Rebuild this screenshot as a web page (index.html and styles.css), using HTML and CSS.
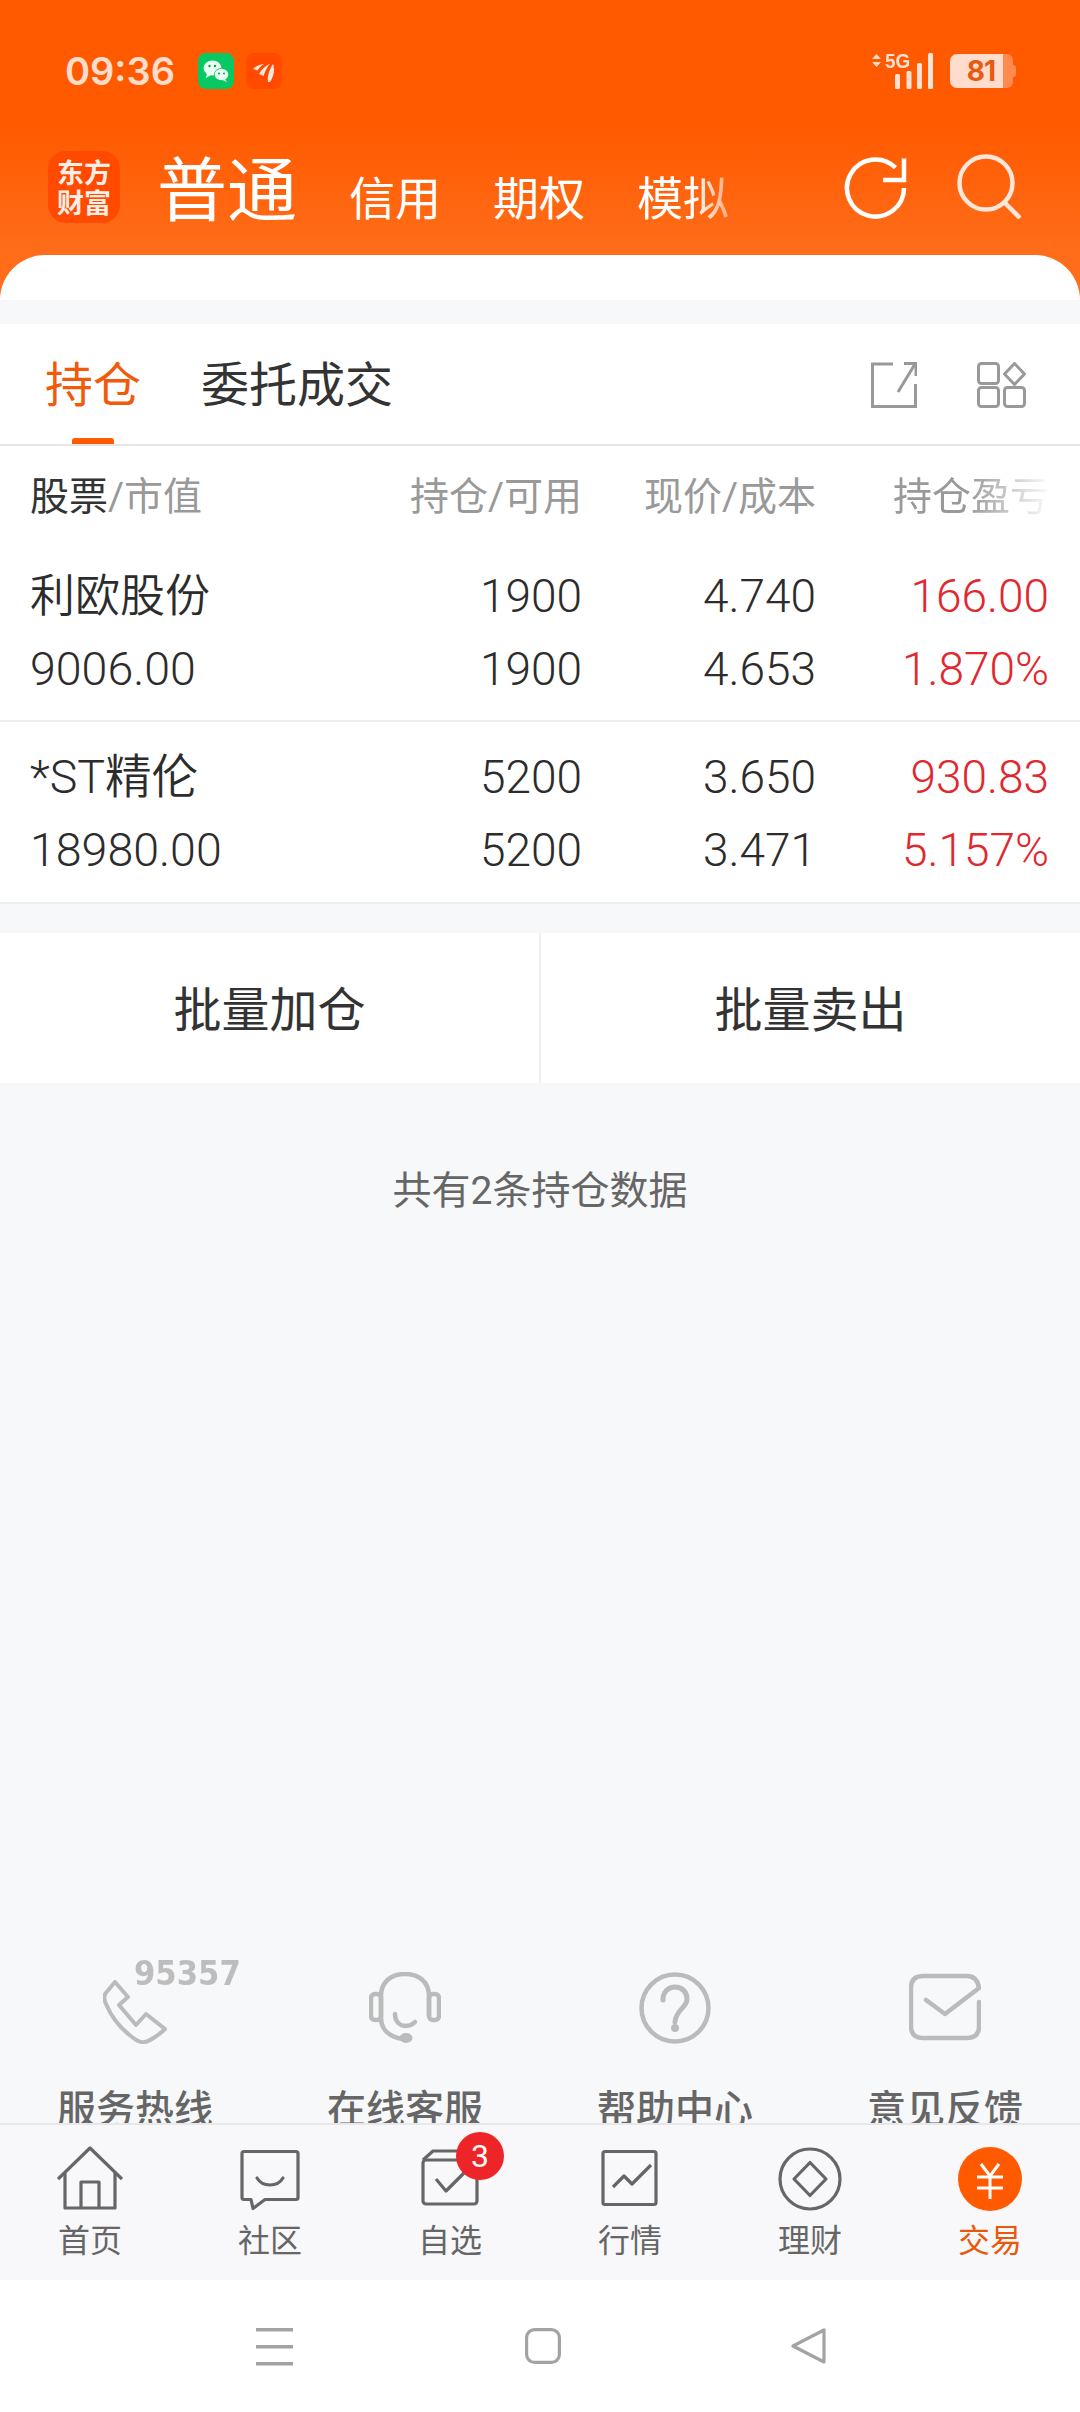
FILE: index.html
```html
<!DOCTYPE html>
<html lang="zh-CN">
<head>
<meta charset="utf-8">
<title>交易</title>
<link rel="stylesheet" href="styles.css">
</head>
<body>
<div class="app">
  <header class="header">
    <div class="status">
      <div class="status-left">
        <span class="time">09:36</span>
        <svg class="notif notif-first" viewBox="0 0 36 36"><rect width="36" height="36" rx="8" fill="#07c862"/><ellipse cx="14.500" cy="15" rx="9" ry="7.600" fill="#eafff2"/><path d="M9 20l-1 5 5-3z" fill="#eafff2"/><ellipse cx="23.500" cy="21.500" rx="7.600" ry="6.400" fill="#07c862"/><ellipse cx="23.500" cy="21.500" rx="6.800" ry="5.800" fill="#eafff2"/><path d="M27 26l2 3-4-1.500z" fill="#eafff2"/><circle cx="11.500" cy="13" r="1.200" fill="#07a050"/><circle cx="17" cy="13" r="1.200" fill="#07a050"/><circle cx="21" cy="20.500" r="1" fill="#07a050"/><circle cx="26" cy="20.500" r="1" fill="#07a050"/></svg>
        <svg class="notif" viewBox="0 0 36 36"><rect width="36" height="36" rx="8" fill="#ff4a00"/><path d="M7 16c3-3 7-4.500 11-5-3 2-5 4-6.500 6.500z" fill="#ffe7dc"/><path d="M13 21c2-4 6-8 11-10.500-3 4-5 8-6.500 12.500z" fill="#ffe7dc"/><path d="M22 29c-1-5 1-12 5-18 2 5 1 12-3 18z" fill="#ffe7dc"/></svg>
      </div>
      <div class="status-right">
        <svg class="net" viewBox="0 0 61 36"><path d="M0 6l4.500-5 4.500 5zM0 9l4.500 5 4.500-5z" fill="#ffd8c6"/><rect x="23" y="21" width="5" height="15" rx="1.500" fill="#ffe2d4"/><rect x="34.500" y="18" width="5" height="18" rx="1.500" fill="#ffe2d4"/><rect x="45" y="10" width="5" height="26" rx="1.500" fill="#ffe2d4"/><rect x="56" y="0" width="5" height="36" rx="1.500" fill="#ffe2d4"/></svg>
        <span class="five-g">5G</span>
        <div class="battery"><span class="battery-level">81</span><span class="battery-rest"></span><span class="battery-nub"></span></div>
      </div>
    </div>
    <nav class="nav">
      <div class="logo">东方<br>财富</div>
      <span class="nav-main">普通</span>
      <span class="nav-item">信用</span>
      <span class="nav-item">期权</span>
      <span class="nav-item nav-fade">模拟</span>
      <svg class="nav-refresh" viewBox="0 0 66 66" fill="none" stroke="#fff" stroke-width="4.500"><path d="M61 33a28.500 28.500 0 1 1-8.500-20.300"/><path d="M61 3.500v21.500H40"/></svg>
      <svg class="nav-search" viewBox="0 0 66 66" fill="none" stroke="#ffe6da" stroke-width="4.500"><circle cx="30" cy="30" r="26.500"/><path d="M49 50l15 15"/></svg>
    </nav>
    <div class="sheet"></div>
  </header>

  <main class="content">
    <section class="panel">
      <div class="tabs">
        <span class="tab tab-active">持仓</span>
        <span class="tab">委托成交</span>
        <svg class="tab-share" viewBox="0 0 46 46" fill="none" stroke="#999" stroke-width="3"><path d="M22 2H1.500v42.500h43V22"/><path d="M44 2 27 30"/><path d="M33 1.500h12V14"/></svg>
        <svg class="tab-grid" viewBox="0 0 50 46" fill="none" stroke="#999" stroke-width="3"><rect x="1.500" y="1.500" width="20" height="20" rx="3"/><rect x="1.500" y="25.500" width="20" height="19" rx="3"/><rect x="27.500" y="25.500" width="20" height="19" rx="3"/><path d="M37.500 1.500l10 10.500-10 10.500-10-10.500z" stroke-linejoin="round"/></svg>
      </div>
      <div class="grid grid-head">
        <span class="head-left"><b>股票</b>/市值</span>
        <span class="cell-right">持仓/可用</span>
        <span class="cell-right">现价/成本</span>
        <span class="cell-right head-fade">持仓盈亏</span>
      </div>
      <div class="grid row">
        <span class="name">利欧股份</span><span class="cell-right">1900</span><span class="cell-right">4.740</span><span class="cell-right up">166.00</span>
        <span class="worth">9006.00</span><span class="cell-right">1900</span><span class="cell-right">4.653</span><span class="cell-right up">1.870%</span>
      </div>
      <div class="grid row row-next">
        <span class="worth">*ST精伦</span><span class="cell-right">5200</span><span class="cell-right">3.650</span><span class="cell-right up">930.83</span>
        <span class="worth">18980.00</span><span class="cell-right">5200</span><span class="cell-right">3.471</span><span class="cell-right up">5.157%</span>
      </div>
    </section>

    <div class="batch">
      <button class="batch-btn">批量加仓</button>
      <button class="batch-btn">批量卖出</button>
    </div>

    <p class="summary">共有2条持仓数据</p>

    <div class="help">
      <div class="help-item">
        <div class="help-icon">
          <svg class="ic-phone" viewBox="0 0 64 64" fill="none" stroke="#bbb" stroke-width="4" stroke-linejoin="round"><path d="M12 2 2 14c-1 3-1 6 1 10 5 12 14 24 26 33 5 4 9 6 13 5 5-1 15-8 20-13L43 34 33 45 16 25l9-8z"/></svg>
          <span class="hotline">95357</span>
        </div>
        <span class="help-label">服务热线</span>
      </div>
      <div class="help-item">
        <div class="help-icon">
          <svg class="ic-square" viewBox="0 0 72 72" fill="none" stroke="#bbb" stroke-width="4.500"><path d="M12 24C12 10 22 2 36 2s24 8 24 22v20"/><path d="M12 24v22c0 12 9 19 22 21"/><rect x="2" y="22" width="10" height="26" rx="4"/><rect x="60" y="22" width="10" height="26" rx="4"/><path d="M26 42c0 8 5 12 11 12 4 0 7-2 9-4" stroke-linecap="round"/><ellipse cx="37" cy="66" rx="6.500" ry="5" fill="#bbb" stroke="none"/></svg>
        </div>
        <span class="help-label">在线客服</span>
      </div>
      <div class="help-item">
        <div class="help-icon">
          <svg class="ic-square" viewBox="0 0 72 72" fill="none" stroke="#bbb" stroke-width="4.500"><circle cx="36" cy="36" r="33.500"/><path d="M24 28c0-8 5-13 12-13s12 5 12 12c0 9-11 10-12 23" stroke-width="5" stroke-linecap="round"/><circle cx="36" cy="56" r="4" fill="#bbb" stroke="none"/></svg>
        </div>
        <span class="help-label">帮助中心</span>
      </div>
      <div class="help-item">
        <div class="help-icon">
          <svg class="ic-square" viewBox="0 0 72 72" fill="none" stroke="#bbb" stroke-width="4.500" stroke-linecap="round" stroke-linejoin="round"><path d="M70 30v24c0 8-4 12-12 12H14C6 66 2 62 2 54V16C2 8 6 4 14 4h44c8 0 11 5 12 12L36 42 17 28"/></svg>
        </div>
        <span class="help-label">意见反馈</span>
      </div>
    </div>
  </main>

  <footer class="tabbar">
    <div class="tb-item">
      <svg class="tb-icon" viewBox="0 0 66 66" fill="none" stroke="#666" stroke-width="3.200" stroke-linejoin="round"><path d="M1 33 33 2l32 31"/><path d="M8 27v35h50V27"/><path d="M24 62V36h18v26"/></svg>
      <span>首页</span>
    </div>
    <div class="tb-item">
      <svg class="tb-icon" viewBox="0 0 66 66" fill="none" stroke="#666" stroke-width="3.200" stroke-linejoin="round"><path d="M7 5.500h52a2 2 0 0 1 2 2v44a2 2 0 0 1-2 2H28l-12 9-2-9H7a2 2 0 0 1-2-2v-44a2 2 0 0 1 2-2z"/><path d="M20 32c3 5 8 7 13 7s10-2 13-7" stroke-linecap="round"/></svg>
      <span>社区</span>
    </div>
    <div class="tb-item">
      <div class="tb-wrap">
        <svg class="tb-icon" viewBox="0 0 66 66" fill="none" stroke="#666" stroke-width="3.200" stroke-linejoin="round"><rect x="6" y="14" width="54" height="44" rx="3"/><path d="M6 14l10-9h36"/><path d="M19 33l10 12 26-26"/></svg>
        <span class="badge">3</span>
      </div>
      <span>自选</span>
    </div>
    <div class="tb-item">
      <svg class="tb-icon" viewBox="0 0 66 66" fill="none" stroke="#666" stroke-width="3.200" stroke-linejoin="round"><rect x="6" y="5.500" width="53" height="53" rx="2"/><path d="M16 41 27 30l8 8 19-19"/></svg>
      <span>行情</span>
    </div>
    <div class="tb-item">
      <svg class="tb-icon" viewBox="0 0 66 66" fill="none" stroke="#666" stroke-width="3.200" stroke-linejoin="round"><circle cx="33" cy="33" r="30"/><path d="M33 16.500 49 33 33 49.500 17 33z"/></svg>
      <span>理财</span>
    </div>
    <div class="tb-item tb-active">
      <svg class="tb-icon" viewBox="0 0 66 66"><circle cx="33" cy="33" r="32" fill="#ff5a00"/><path d="M24 18l9 12 9-12M20 31h26M20 42h26M33 30v23" fill="none" stroke="#fff" stroke-width="3"/></svg>
      <span>交易</span>
    </div>
  </footer>

  <div class="sysnav">
    <svg class="sys-menu" viewBox="0 0 37 38" fill="#a3a3a3"><rect y="0" width="37" height="3.500"/><rect y="17" width="37" height="3.500"/><rect y="34" width="37" height="3.500"/></svg>
    <svg class="sys-home" viewBox="0 0 36 36" fill="none" stroke="#a3a3a3" stroke-width="3.200"><rect x="1.600" y="1.600" width="32.800" height="32.800" rx="8"/></svg>
    <svg class="sys-back" viewBox="0 0 36 36" fill="none" stroke="#a3a3a3" stroke-width="3.200" stroke-linejoin="round"><path d="M33 2v32L2 18z"/></svg>
  </div>
</div>
</body>
</html>
```
FILE: styles.css
```css
* { box-sizing: border-box; }
html, body { margin: 0; padding: 0; }
body {
  width: 1080px;
  height: 2412px;
  overflow: hidden;
  font-family: Roboto, "Noto Sans CJK SC", sans-serif;
  color: #333;
  background: #fff;
}
.app { display: flex; flex-direction: column; height: 2412px; }

/* header */
.header {
  display: flex;
  flex-direction: column;
  height: 300px;
  flex: none;
  background: linear-gradient(180deg, #ff5a00 0, #ff5a00 125px, #ff6d1a 255px);
}
.status {
  display: flex;
  justify-content: space-between;
  padding: 53px 64px 0 65px;
  height: 89px;
}
.status-left, .status-right { display: flex; align-items: center; position: relative; }
.time {
  font-family: Inter, sans-serif;
  font-size: 38px;
  font-weight: 600;
  line-height: 36px;
  color: #ffdccb;
  width: 107px;
  white-space: nowrap;
}
.notif { width: 36px; height: 36px; margin-left: 12px; }
.notif-first { margin-left: 26px; }
.net { width: 61px; height: 36px; margin-right: 17px; }
.five-g {
  position: absolute;
  left: 13px;
  top: -3px;
  font-family: "Liberation Sans", sans-serif;
  font-size: 21px;
  line-height: 22px;
  font-weight: 700;
  color: #ffe2d4;
  transform: scaleX(.9);
  transform-origin: left;
}
.battery { display: flex; align-items: center; height: 34px; }
.battery-level {
  width: 53px;
  height: 34px;
  background: #ffdccb;
  border-radius: 7px 0 0 7px;
  color: #e85a12;
  font-family: Inter, sans-serif;
  font-size: 28px;
  font-weight: 700;
  line-height: 34px;
  text-align: center;
  padding-left: 9px;
  letter-spacing: -1px;
}
.battery-rest { width: 10px; height: 34px; background: #ff8a4d; border-radius: 0 6px 6px 0; }
.battery-nub { width: 3px; height: 12px; background: #ff8a4d; border-radius: 0 3px 3px 0; }

.nav {
  display: flex;
  align-items: flex-end;
  padding-left: 48px;
  margin-top: 62px;
  height: 72px;
  color: #fff;
}
.logo {
  width: 72px;
  height: 72px;
  flex: none;
  padding-top: 6px;
  background: #ff4a00;
  border-radius: 18px;
  font-family: "Noto Sans CJK SC", sans-serif;
  font-size: 27px;
  font-weight: 700;
  line-height: 30px;
  text-align: center;
  color: #ffeee6;
}
.nav-main {
  font-family: "Noto Sans CJK SC", sans-serif;
  font-size: 70px;
  line-height: 78px;
  margin-left: 37px;
  margin-right: 52px;
  position: relative;
  top: 2px;
}
.nav-item {
  font-family: "Noto Sans CJK SC", sans-serif;
  font-size: 46px;
  line-height: 56px;
  margin-right: 52px;
}
.nav-fade {
  -webkit-mask-image: linear-gradient(90deg, #000 62%, rgba(0,0,0,.45) 100%);
  mask-image: linear-gradient(90deg, #000 62%, rgba(0,0,0,.45) 100%);
}
.nav-refresh { width: 66px; height: 66px; position: absolute; left: 843px; top: 155px; }
.nav-search { width: 66px; height: 66px; position: absolute; left: 956px; top: 153px; }
.sheet {
  margin-top: auto;
  height: 45px;
  background: #fff;
  border-radius: 45px 45px 0 0;
}

/* content */
.content {
  flex: 1;
  min-height: 0;
  display: flex;
  flex-direction: column;
  background: #f7f8fa;
  padding-top: 24px;
  overflow: hidden;
}
.panel { background: #fff; flex: none; }
.tabs {
  display: flex;
  align-items: flex-start;
  height: 122px;
  padding: 29px 0 0 45px;
  border-bottom: 2px solid #e6e6e6;
  font-family: "Noto Sans CJK SC", sans-serif;
}
.tab {
  position: relative;
  font-size: 48px;
  line-height: 56px;
  margin-right: 60px;
}
.tab-active { color: #f05a0a; }
.tab-active::after {
  content: "";
  position: absolute;
  left: 27px;
  top: 85px;
  width: 42px;
  height: 6px;
  background: #ff5a00;
  border-radius: 3px 3px 0 0;
}
.tab-share { width: 46px; height: 46px; margin: 9px 0 0 auto; }
.tab-grid { width: 50px; height: 46px; margin: 9px 53px 0 60px; }

.grid {
  display: grid;
  grid-template-columns: 302px 250px 234px 233px;
  padding-left: 30px;
}
.cell-right { text-align: right; }
.grid-head {
  height: 94px;
  align-items: center;
  font-size: 39px;
  color: #999;
  font-family: Roboto, "Noto Sans CJK SC", sans-serif;
  white-space: nowrap;
}
.head-left b { font-weight: 400; color: #333; }
.head-fade {
  -webkit-mask-image: linear-gradient(90deg, #000 65%, rgba(0,0,0,.04) 100%);
  mask-image: linear-gradient(90deg, #000 65%, rgba(0,0,0,.04) 100%);
}
.row {
  padding-top: 20px;
  padding-bottom: 11px;
  font-size: 46px;
  line-height: 73px;
  grid-auto-rows: 73px;
  align-content: start;
  height: 182px;
  border-bottom: 2px solid #eeeeee;
  white-space: nowrap;
  font-weight: 350;
  color: #2c2c2c;
}
.row-next { padding-top: 19px; }
.name { font-size: 45px; }
.worth { font-size: 46.5px; }
.row .up { color: #e0282e; }

.batch {
  display: flex;
  flex: none;
  margin-top: 29px;
  height: 150px;
  background: #fff;
}
.batch-btn {
  flex: 1;
  border: 0;
  padding: 0 0 4px;
  background: none;
  font-family: "Noto Sans CJK SC", sans-serif;
  font-size: 48px;
  color: #333;
}
.batch-btn + .batch-btn { border-left: 2px solid #f0f0f0; }
.summary {
  margin: 85px 0 0;
  text-align: center;
  font-size: 39px;
  line-height: 46px;
  color: #666;
}

.help {
  margin-top: auto;
  display: grid;
  grid-template-columns: repeat(4, 1fr);
  height: 163px;
  overflow: hidden;
  flex: none;
}
.help-item { display: flex; flex-direction: column; align-items: center; }
.help-icon {
  position: relative;
  height: 84px;
  width: 76px;
  display: flex;
  align-items: flex-end;
  justify-content: center;
}
.ic-phone { width: 64px; height: 64px; margin-right: 0; }
.ic-square { width: 72px; height: 72px; }
.hotline {
  position: absolute;
  left: 37px;
  top: -1px;
  font-family: "DejaVu Sans", sans-serif;
  font-weight: 700;
  font-size: 33px;
  line-height: 30px;
  color: #bdbdbd;
  letter-spacing: 0;
  transform: scaleX(.93);
  transform-origin: left;
}
.help-label {
  margin-top: 43px;
  font-family: "Noto Sans CJK SC", sans-serif;
  font-size: 39px;
  font-weight: 500;
  line-height: 39px;
  color: #666;
  white-space: nowrap;
}

/* tab bar */
.tabbar {
  flex: none;
  display: grid;
  grid-template-columns: repeat(6, 180px);
  height: 157px;
  padding-top: 21px;
  background: #f8f8fa;
  border-top: 2px solid #e8e8ea;
}
.tb-item {
  display: flex;
  flex-direction: column;
  align-items: center;
  font-family: "Noto Sans CJK SC", sans-serif;
  font-size: 32px;
  line-height: 40px;
  color: #666;
}
.tb-item span:last-child { margin-top: 6px; }
.tb-icon { width: 66px; height: 66px; display: block; }
.tb-wrap { position: relative; }
.tb-active { color: #e8590c; }
.tb-item .badge {
  position: absolute;
  left: 39px;
  top: -20px;
  width: 48px;
  height: 48px;
  margin: 0;
  border-radius: 50%;
  background: #ee2528;
  color: #fff;
  font-family: Roboto, sans-serif;
  font-size: 32px;
  line-height: 48px;
  text-align: center;
}

/* system nav */
.sysnav {
  flex: none;
  height: 132px;
  background: #fff;
  display: flex;
  align-items: flex-start;
  padding-top: 48px;
}
.sys-menu { width: 37px; height: 38px; margin-left: 256px; }
.sys-home { width: 36px; height: 36px; margin-left: 232px; }
.sys-back { width: 36px; height: 36px; margin-left: 230px; }
```
